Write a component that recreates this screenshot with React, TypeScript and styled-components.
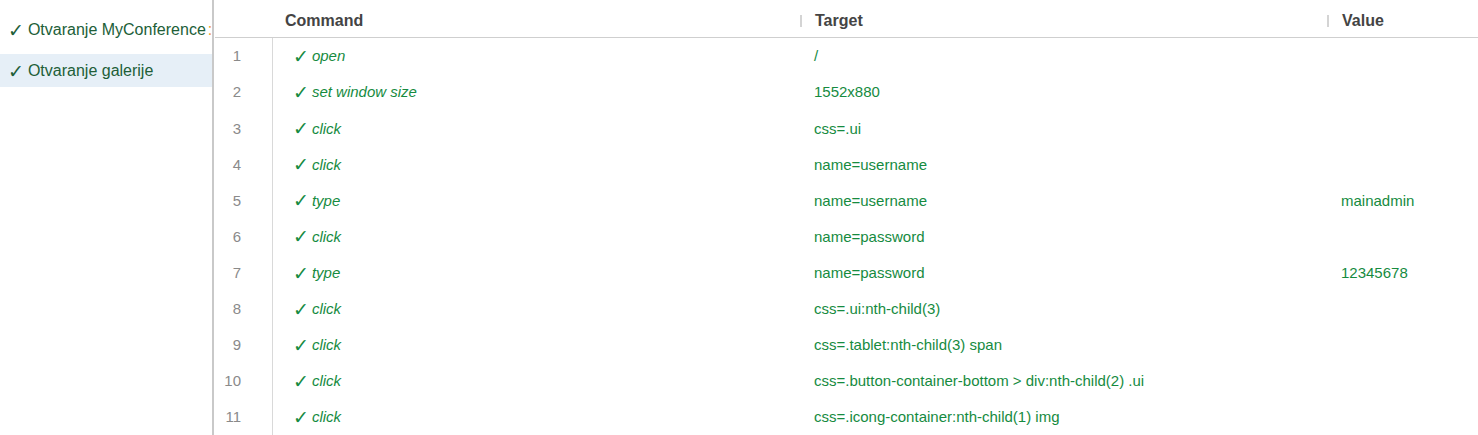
import React from "react";
import styled, { createGlobalStyle } from "styled-components";

const Global = createGlobalStyle`
  html, body { margin: 0; padding: 0; background: #fff; }
  body { font-family: "Liberation Sans", Arial, sans-serif; }
`;

const Page = styled.div`
  display: flex;
  width: 1478px;
  height: 435px;
  overflow: hidden;
`;

const Sidebar = styled.div`
  width: 212px;
  flex: none;
  border-right: 2px solid #c9c9c9;
  padding-top: 13px;
  display: flex;
  flex-direction: column;
  gap: 8px;
`;

const SideItem = styled.div<{ $selected?: boolean }>`
  height: 33px;
  display: flex;
  align-items: center;
  padding-left: 8px;
  white-space: nowrap;
  overflow: hidden;
  font-size: 16px;
  color: #215e38;
  background: ${(p) => (p.$selected ? "#e6eff7" : "transparent")};
`;

const SideCheck = styled.span`
  font-family: "DejaVu Sans", sans-serif;
  font-size: 19px;
  line-height: 16px;
  margin-right: 4px;
  color: #215e38;
`;

const Spinner = styled.span`
  color: #f0a030;
  margin-left: 2px;
`;

const Main = styled.div`
  flex: 1;
  display: flex;
  flex-direction: column;
  min-width: 0;
  margin-left: 1px;
`;

const cols = "58px 527px 527px 1fr";

const HeaderRow = styled.div`
  display: grid;
  grid-template-columns: ${cols};
  height: 38px;
  border-bottom: 1px solid #cfcfcf;
  align-items: center;
  padding-top: 5px;
  box-sizing: border-box;
`;

const HeadCell = styled.div<{ $sep?: boolean; $pad: number }>`
  font-size: 16px;
  font-weight: bold;
  color: #444;
  line-height: 12px;
  padding-left: ${(p) => p.$pad}px;
  border-left: ${(p) => (p.$sep ? "2px solid #d4d4d4" : "none")};
`;

const Row = styled.div`
  display: grid;
  grid-template-columns: ${cols};
  height: 36.3px;
  align-items: center;
  font-size: 15px;
`;

const NumCell = styled.div`
  height: 100%;
  display: flex;
  align-items: center;
  justify-content: flex-end;
  padding-right: 31px;
  border-right: 1px solid #d9d9d9;
  color: #8a8a8a;
  box-sizing: border-box;
`;

const CmdCell = styled.div`
  padding-left: 20px;
  color: #168b3f;
  font-style: italic;
  display: flex;
  align-items: center;
`;

const Check = styled.span`
  font-family: "DejaVu Sans", sans-serif;
  font-style: normal;
  font-size: 19px;
  line-height: 16px;
  margin-right: 3px;
`;

const TextCell = styled.div`
  padding-left: 14px;
  color: #168b3f;
  white-space: nowrap;
`;

const rows: [string, string, string][] = [
  ["open", "/", ""],
  ["set window size", "1552x880", ""],
  ["click", "css=.ui", ""],
  ["click", "name=username", ""],
  ["type", "name=username", "mainadmin"],
  ["click", "name=password", ""],
  ["type", "name=password", "12345678"],
  ["click", "css=.ui:nth-child(3)", ""],
  ["click", "css=.tablet:nth-child(3) span", ""],
  ["click", "css=.button-container-bottom > div:nth-child(2) .ui", ""],
  ["click", "css=.icong-container:nth-child(1) img", ""],
];

export default function App() {
  return (
    <>
      <Global />
      <Page>
        <Sidebar>
          <SideItem>
            <SideCheck>✓</SideCheck>Otvaranje MyConference<Spinner>:</Spinner>
          </SideItem>
          <SideItem $selected>
            <SideCheck>✓</SideCheck>Otvaranje galerije
          </SideItem>
        </Sidebar>
        <Main>
          <HeaderRow>
            <div />
            <HeadCell $pad={12}>Command</HeadCell>
            <HeadCell $sep $pad={13}>Target</HeadCell>
            <HeadCell $sep $pad={13}>Value</HeadCell>
          </HeaderRow>
          {rows.map(([c, t, v], i) => (
            <Row key={i}>
              <NumCell>{i + 1}</NumCell>
              <CmdCell>
                <Check>✓</Check>
                {c}
              </CmdCell>
              <TextCell>{t}</TextCell>
              <TextCell>{v}</TextCell>
            </Row>
          ))}
        </Main>
      </Page>
    </>
  );
}
